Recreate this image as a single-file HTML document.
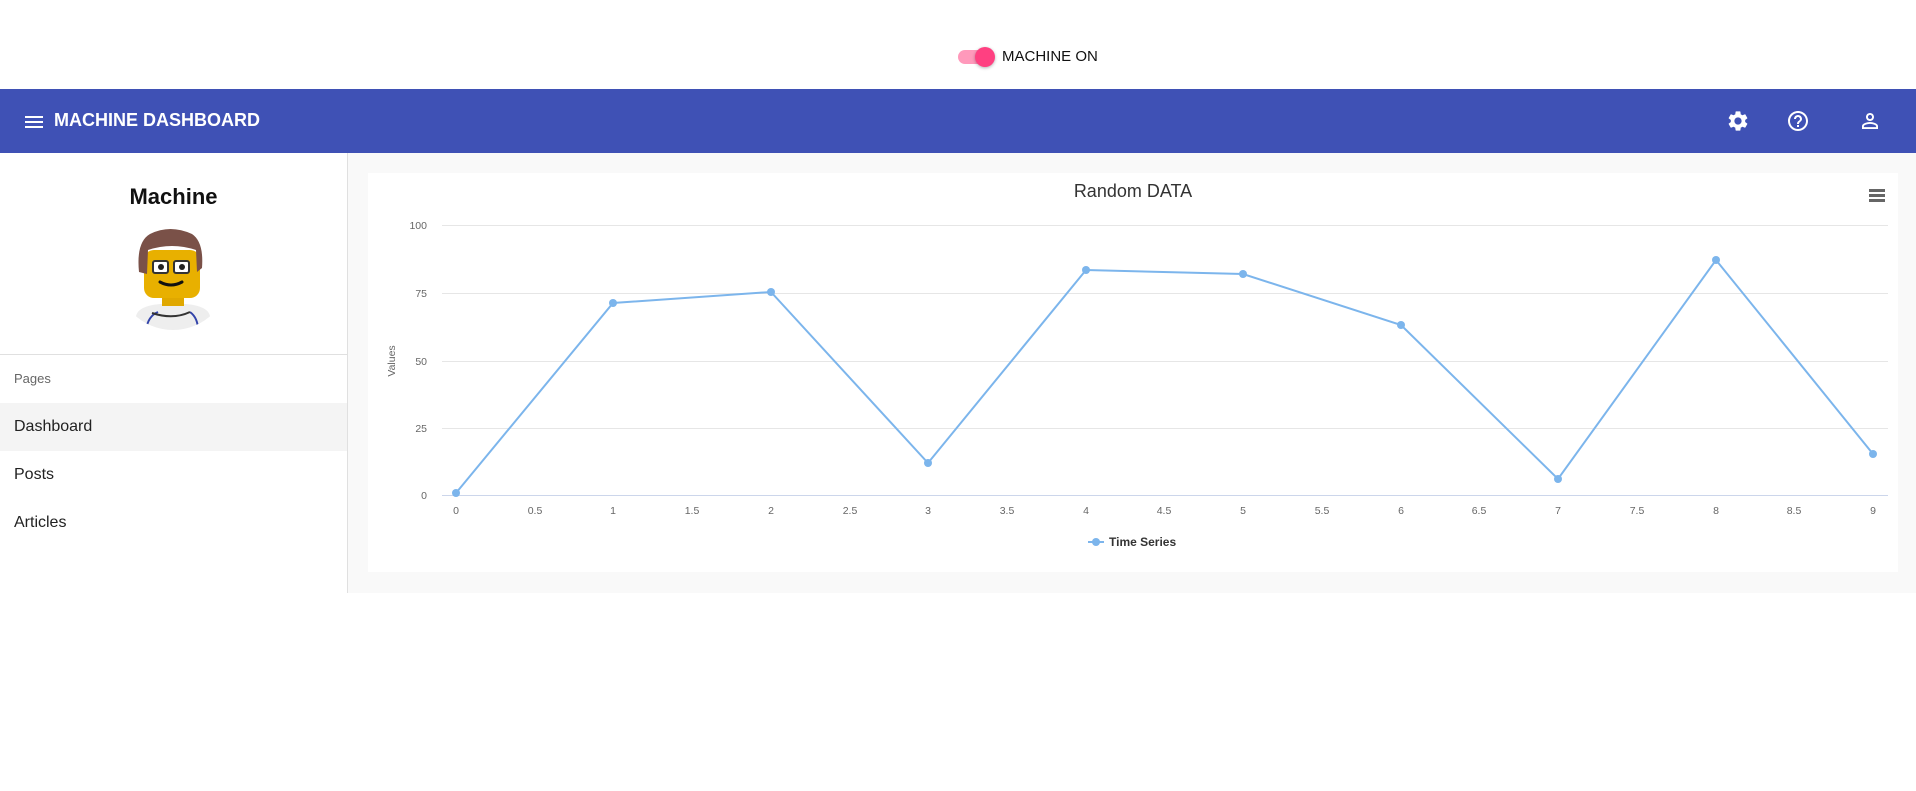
<!DOCTYPE html>
<html><head><meta charset="utf-8"><style>
*{margin:0;padding:0;box-sizing:border-box}
body{width:1916px;height:791px;background:#fff;font-family:"Liberation Sans",Roboto,sans-serif;position:relative;overflow:hidden}
.abs{position:absolute}
</style></head><body>
<div class="abs" style="left:958px;top:50px;width:34px;height:14px;border-radius:7px;background:#ff99bb"></div>
<div class="abs" style="left:975px;top:47px;width:20px;height:20px;border-radius:50%;background:#ff4081;box-shadow:0 1px 3px rgba(0,0,0,.3)"></div>
<div class="abs" style="left:1002px;top:48px;font-size:15px;color:#111">MACHINE ON</div>
<div class="abs" style="left:0;top:89px;width:1916px;height:64px;background:#3f51b5"></div>
<svg class="abs" style="left:22px;top:110px" width="24" height="24" viewBox="0 0 24 24"><path d="M3 18h18v-2H3v2zm0-5h18v-2H3v2zm0-7v2h18V6H3z" fill="#fff"/></svg>
<div class="abs" style="left:54px;top:110px;font-size:18px;font-weight:bold;color:#fff">MACHINE DASHBOARD</div>
<svg class="abs" style="left:1726px;top:109px" width="24" height="24" viewBox="0 0 24 24"><path fill="#fff" d="M19.14 12.94c.04-.3.06-.61.06-.94 0-.32-.02-.64-.07-.94l2.030-1.58c.18-.14.23-.41.12-.61l-1.92-3.32c-.12-.22-.37-.29-.59-.22l-2.39.96c-.5-.38-1.03-.7-1.62-.94l-.36-2.54c-.04-.24-.24-.41-.48-.41h-3.84c-.24 0-.43.17-.47.41l-.36 2.54c-.59.24-1.13.57-1.62.94l-2.39-.96c-.22-.08-.47 0-.59.22L2.74 8.87c-.12.21-.08.47.12.61l2.03 1.58c-.05.3-.09.63-.09.94s.02.64.07.94l-2.03 1.58c-.18.14-.23.41-.12.61l1.92 3.32c.12.22.37.29.59.22l2.39-.96c.5.38 1.03.7 1.62.94l.36 2.54c.05.24.24.41.48.41h3.84c.24 0 .44-.17.47-.41l.36-2.54c.59-.24 1.130-.56 1.62-.94l2.39.96c.22.08.47 0 .59-.22l1.92-3.32c.12-.22.07-.47-.12-.61l-2.01-1.58zM12 15.6c-1.98 0-3.6-1.62-3.6-3.6s1.62-3.6 3.6-3.6 3.6 1.62 3.6 3.6-1.62 3.6-3.6 3.6z"/></svg>
<svg class="abs" style="left:1786px;top:109px" width="24" height="24" viewBox="0 0 24 24"><path fill="#fff" d="M11 18h2v-2h-2v2zm1-16C6.48 2 2 6.48 2 12s4.48 10 10 10 10-4.48 10-10S17.52 2 12 2zm0 18c-4.41 0-8-3.59-8-8s3.59-8 8-8 8 3.590 8 8-3.59 8-8 8zm0-14c-2.21 0-4 1.79-4 4h2c0-1.1.9-2 2-2s2 .9 2 2c0 2-3 1.75-3 5h2c0-2.25 3-2.5 3-5 0-2.21-1.79-4-4-4z"/></svg>
<svg class="abs" style="left:1858px;top:109px" width="24" height="24" viewBox="0 0 24 24"><path fill="#fff" d="M12 5.9c1.16 0 2.1.94 2.1 2.1s-.94 2.1-2.1 2.1S9.9 9.16 9.9 8s.94-2.1 2.1-2.1m0 9c2.97 0 6.1 1.46 6.1 2.1v1.1H5.9V17c0-.64 3.13-2.1 6.1-2.1M12 4C9.79 4 8 5.79 8 8s1.79 4 4 4 4-1.79 4-4-1.79-4-4-4zm0 9c-2.67 0-8 1.34-8 4v3h16v-3c0-2.66-5.33-4-8-4z"/></svg>
<div class="abs" style="left:347px;top:153px;width:1px;height:440px;background:#e0e0e0"></div>
<div class="abs" style="left:348px;top:153px;width:1568px;height:440px;background:#f9f9f9"></div>
<div class="abs" style="left:0;top:184px;width:347px;text-align:center;font-size:22px;font-weight:bold;color:#111">Machine</div>
<svg class="abs" style="left:130px;top:228px" width="86" height="102" viewBox="0 0 86 102">
<defs><clipPath id="c"><circle cx="43" cy="45" r="57"/></clipPath></defs>
<g clip-path="url(#c)">
<path d="M6 88 Q8 78 30 76 L56 76 Q78 78 80 88 L80 102 L6 102Z" fill="#eee"/>
<path d="M16 102 Q18 88 28 84 M60 84 Q68 90 68 102" stroke="#34a" stroke-width="2" fill="none"/>
<path d="M22 85 Q43 92 60 84" stroke="#333" stroke-width="2" fill="none"/>
<rect x="32" y="64" width="22" height="14" fill="#e0a800"/>
<rect x="14" y="22" width="56" height="48" rx="10" fill="#e8b000"/>
<path d="M9 44 Q6 14 20 6 Q40 -4 62 6 Q74 14 72 40 L67 44 L66 22 Q42 14 18 22 L17 46Z" fill="#7a5148"/>
<rect x="23" y="33" width="15" height="12" rx="2" fill="#fff" stroke="#333" stroke-width="2"/>
<rect x="44" y="33" width="15" height="12" rx="2" fill="#fff" stroke="#333" stroke-width="2"/>
<circle cx="31" cy="39" r="3" fill="#222"/><circle cx="52" cy="39" r="3" fill="#222"/>
<path d="M30 54 Q41 60 52 54" stroke="#111" stroke-width="3" fill="none" stroke-linecap="round"/>
</g></svg>
<div class="abs" style="left:0;top:354px;width:347px;height:1px;background:#e0e0e0"></div>
<div class="abs" style="left:14px;top:371px;font-size:13px;color:#666">Pages</div>
<div class="abs" style="left:0;top:403px;width:347px;height:48px;background:#f4f4f4"></div>
<div class="abs" style="left:14px;top:418px;font-size:16px;color:#222">Dashboard</div>
<div class="abs" style="left:14px;top:466px;font-size:16px;color:#222">Posts</div>
<div class="abs" style="left:14px;top:514px;font-size:16px;color:#222">Articles</div>
<div class="abs" style="left:368px;top:173px;width:1530px;height:399px;background:#fff"></div>
<svg class="abs" style="left:0;top:0" width="1916" height="791">
<g font-family="Liberation Sans,DejaVu Sans,sans-serif">
<text x="1133" y="197" text-anchor="middle" font-size="18" fill="#333">Random DATA</text>
<g fill="#666"><rect x="1869" y="189" width="16" height="3"/><rect x="1869" y="194" width="16" height="3"/><rect x="1869" y="199" width="16" height="3"/></g>
<g stroke="#e6e6e6" stroke-width="1">
<line x1="442" y1="225.5" x2="1888" y2="225.5"/><line x1="442" y1="293.5" x2="1888" y2="293.5"/>
<line x1="442" y1="361.5" x2="1888" y2="361.5"/><line x1="442" y1="428.5" x2="1888" y2="428.5"/></g>
<line x1="442" y1="495.5" x2="1888" y2="495.5" stroke="#ccd6eb"/>
<g font-size="10.5" fill="#666" text-anchor="end">
<text x="427" y="229">100</text><text x="427" y="297">75</text><text x="427" y="365">50</text><text x="427" y="432">25</text><text x="427" y="499">0</text></g>
<text transform="translate(395,361) rotate(-90)" text-anchor="middle" font-size="10.5" fill="#666">Values</text>
<g font-size="10.5" fill="#666" text-anchor="middle">
<text x="456" y="514">0</text><text x="535" y="514">0.5</text><text x="613" y="514">1</text><text x="692" y="514">1.5</text><text x="771" y="514">2</text><text x="850" y="514">2.5</text><text x="928" y="514">3</text><text x="1007" y="514">3.5</text><text x="1086" y="514">4</text><text x="1164" y="514">4.5</text><text x="1243" y="514">5</text><text x="1322" y="514">5.5</text><text x="1401" y="514">6</text><text x="1479" y="514">6.5</text><text x="1558" y="514">7</text><text x="1637" y="514">7.5</text><text x="1716" y="514">8</text><text x="1794" y="514">8.5</text><text x="1873" y="514">9</text></g>
<polyline fill="none" stroke="#7cb5ec" stroke-width="2" points="456,493 613,303 771,292 928,463 1086,270 1243,274 1401,325 1558,479 1716,260 1873,454"/>
<g fill="#7cb5ec"><circle cx="456" cy="493" r="4"/><circle cx="613" cy="303" r="4"/><circle cx="771" cy="292" r="4"/><circle cx="928" cy="463" r="4"/><circle cx="1086" cy="270" r="4"/><circle cx="1243" cy="274" r="4"/><circle cx="1401" cy="325" r="4"/><circle cx="1558" cy="479" r="4"/><circle cx="1716" cy="260" r="4"/><circle cx="1873" cy="454" r="4"/></g>
<line x1="1088" y1="542" x2="1104" y2="542" stroke="#7cb5ec" stroke-width="2"/><circle cx="1096" cy="542" r="4" fill="#7cb5ec"/>
<text x="1109" y="546" font-size="12" font-weight="bold" fill="#333">Time Series</text>
</g></svg>
</body></html>
